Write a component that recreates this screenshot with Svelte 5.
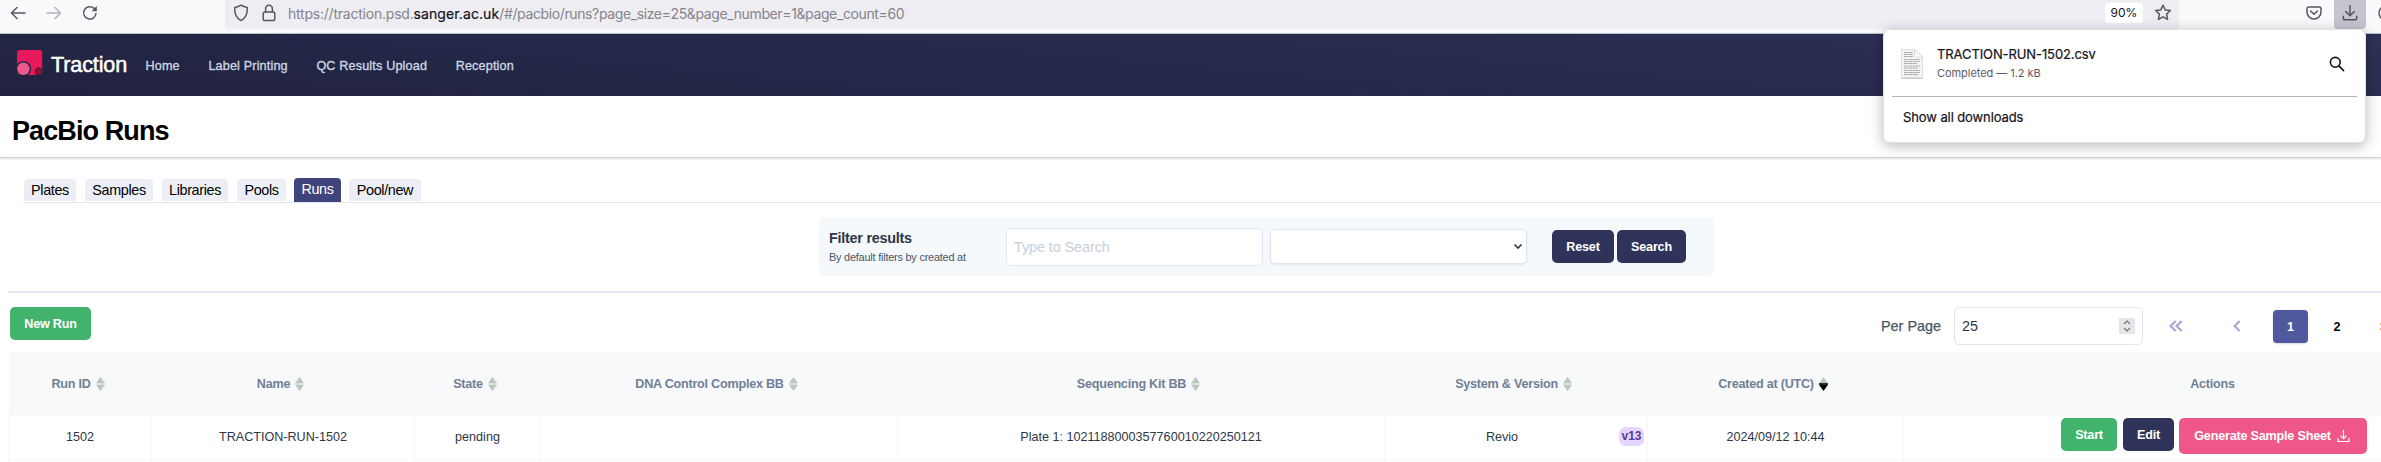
<script>
  const tabs = [
    { t: 'Plates', w: 52 }, { t: 'Samples', w: 68 }, { t: 'Libraries', w: 66 },
    { t: 'Pools', w: 49 }, { t: 'Runs', w: 47, on: true }, { t: 'Pool/new', w: 72 }
  ];
  const nav = ['Home', 'Label Printing', 'QC Results Upload', 'Reception'];
  const cols = [
    { h: 'Run ID', v: '1502' },
    { h: 'Name', v: 'TRACTION-RUN-1502' },
    { h: 'State', v: 'pending' },
    { h: 'DNA Control Complex BB', v: '' },
    { h: 'Sequencing Kit BB', v: 'Plate 1: 1021188000357760010220250121' },
    { h: 'System & Version', v: 'Revio', badge: 'v13' },
    { h: 'Created at (UTC)', v: '2024/09/12 10:44', desc: true }
  ];
</script>

<div class="page">
  <div class="toolbar">
    <div class="history">
      <svg width="16" height="16" viewBox="0 0 16 16" class="ic"><path d="M15 8H1.5M7 2.5L1.5 8L7 13.5" /></svg>
      <svg width="16" height="16" viewBox="0 0 16 16" class="ic dim"><path d="M1 8H14.5M9 2.5L14.5 8L9 13.5" /></svg>
      <svg width="16" height="16" viewBox="0 0 16 16" class="ic"><path d="M14 8.5A6.2 6.2 0 1 1 11.8 3.1L13 4.3" /><path class="fill" d="M14.8 1V6.2H9.6Z" /></svg>
    </div>
    <div class="urlbar">
      <svg width="16" height="18" viewBox="0 0 16 18" class="ic"><path d="M8 1.2C6.2 2.6 4 3.2 1.8 3.4C1.3 9.5 3.2 14 8 16.6C12.8 14 14.7 9.5 14.2 3.4C12 3.2 9.8 2.6 8 1.2Z" /></svg>
      <svg width="14" height="18" viewBox="0 0 14 18" class="ic lock"><rect x="1.2" y="8" width="11.6" height="8.6" rx="1.8" /><path d="M3.6 8V4.6A3.4 3.4 0 0 1 10.4 4.6V8" /></svg>
      <span class="url">https://traction.psd.<b>sanger.ac.uk</b><span class="path">/#/pacbio/runs?page_size=25&amp;page_number=1&amp;page_count=60</span></span>
      <span class="zoom">90%</span>
      <svg width="18" height="17" viewBox="0 0 18 17" class="ic"><path d="M9 1.2L11.2 5.9L16.4 6.5L12.6 10.1L13.6 15.4L9 12.8L4.4 15.4L5.4 10.1L1.6 6.5L6.8 5.9Z" /></svg>
    </div>
    <div class="tools">
      <svg width="16" height="16" viewBox="0 0 16 16" class="ic pocket"><path d="M2.6 2H13.4A1.6 1.6 0 0 1 15 3.6V7A7 7 0 0 1 1 7V3.6A1.6 1.6 0 0 1 2.6 2ZM4.6 6L8 9.3L11.4 6" /></svg>
      <div class="dl"><svg width="16" height="16" viewBox="0 0 16 16" class="ic"><path d="M8 .5V10.5M3.8 6.6L8 10.7L12.2 6.6M1.3 11.2V13A1.8 1.8 0 0 0 3.1 14.8H12.9A1.8 1.8 0 0 0 14.7 13V11.2" /></svg></div>
      <svg width="16" height="16" viewBox="0 0 16 16" class="ic account"><circle cx="8" cy="8" r="7" /></svg>
    </div>
  </div>

  <nav>
    <svg class="logo" width="26" height="26" viewBox="0 0 26 26">
      <defs><clipPath id="tile"><rect width="25.2" height="25" rx="2.6" /></clipPath></defs>
      <g clip-path="url(#tile)">
        <rect width="26" height="26" fill="#e8185b" />
        <circle cx="6.4" cy="18.8" r="7.8" fill="#272b4c" />
        <circle cx="6.4" cy="18.8" r="6.2" fill="#f0588b" />
        <circle cx="22" cy="21.6" r="4.2" fill="#3c1840" />
        <circle cx="22" cy="21.6" r="3.2" fill="#8c1038" />
      </g>
    </svg>
    <span class="brand">Traction</span>
    {#each nav as n}<span class="link">{n}</span>{/each}
  </nav>

  <header><h1>PacBio Runs</h1></header>

  <div class="tabs">
    {#each tabs as tab}<span class="tab" class:on={tab.on} style="width:{tab.w}px">{tab.t}</span>{/each}
  </div>

  <div class="filter">
    <div class="legend"><strong>Filter results</strong><small>By default filters by created at</small></div>
    <div class="search">Type to Search</div>
    <div class="select"><svg width="10" height="7" viewBox="0 0 10 7"><path d="M1.5 1.5L5 5L8.5 1.5" /></svg></div>
    <span class="btn navy reset">Reset</span>
    <span class="btn navy find">Search</span>
  </div>

  <div class="controls">
    <span class="btn green new">New Run</span>
    <div class="pager">
      <span class="per">Per Page</span>
      <div class="num">25<span class="spin"><svg width="10" height="14" viewBox="0 0 10 14"><path d="M2 5L5 2L8 5M2 9L5 12L8 9" /></svg></span></div>
      <svg class="chev first" width="14" height="12" viewBox="0 0 14 12"><path d="M6.7 1L1.6 6L6.7 11M12.7 1L7.6 6L12.7 11" /></svg>
      <svg class="chev prev" width="8" height="12" viewBox="0 0 8 12"><path d="M6.7 1L1.6 6L6.7 11" /></svg>
      <span class="pg cur">1</span>
      <span class="pg">2</span>
      <span class="pg">3</span>
    </div>
  </div>

  <div class="grid head">
    {#each cols as c}
      <div class="cell">{c.h}<svg class="sort" width="9" height="14" viewBox="0 0 9 14"><path d="M4.5 0L9 6.2H0Z" fill="#b9c7c0" /><path d="M0 7.8H9L4.5 14Z" fill={c.desc ? '#000' : '#b9c7c0'} /><path d="M0 6.2H9V7.8H0Z" fill={c.desc ? '#000' : '#dce3e0'} /></svg></div>
    {/each}
    <div class="cell">Actions</div>
  </div>
  <div class="grid row">
    {#each cols as c}
      <div class="cell"><span class="val">{c.v}</span>{#if c.badge}<span class="badge">{c.badge}</span>{/if}</div>
    {/each}
    <div class="cell actions">
      <span class="btn green start">Start</span>
      <span class="btn navy edit">Edit</span>
      <span class="btn pink gen">Generate Sample Sheet<svg width="13" height="14" viewBox="0 0 13 14"><path d="M6.5 .8V9.5M3.5 6.7L6.5 9.7L9.5 6.7M1 9V12.5H12V9" /></svg></span>
    </div>
  </div>
  <div class="grid row next">
    {#each [...cols, 0] as _}<div class="cell"></div>{/each}
  </div>

  <div class="popup">
    <div class="item">
      <svg width="22" height="30" viewBox="0 0 22 30">
        <path d="M.5 .5H13.5L21.5 8V29H.5Z" fill="#f4f4f4" stroke="#ddd" />
        <path d="M.5 29.2H21.5" stroke="#bbb" />
        <path d="M13.5 .5L21.5 8H15A1.5 1.5 0 0 1 13.5 6.5Z" fill="#fff" stroke="#ccc" stroke-width=".7" />
        <path d="M3 3.5H12M3 5.5H12M3 7.5H12M3 10.5H19M3 12.5H19M3 14.5H16M3 17H19M3 19H17M3 21.5H19M3 23.5H19M3 25.5H17" stroke="#aaa" stroke-width="1.2" stroke-dasharray="3 .4 2 .3" />
      </svg>
      <div class="file"><span class="name">TRACTION-RUN-1502.csv</span><span class="status">Completed — 1.2 kB</span></div>
      <svg class="mag" width="16" height="16" viewBox="0 0 16 16"><circle cx="6.3" cy="6.3" r="4.9" /><path d="M9.9 9.9L14.6 14.6" /></svg>
    </div>
    <div class="all">Show all downloads</div>
  </div>
</div>

<style>
  :global(body) { background: #fff; overflow: hidden; }
  .page, .page * { box-sizing: border-box; }
  .page { width: 2381px; height: 462px; overflow: hidden; position: relative; font-family: "Liberation Sans", Arial, sans-serif; font-size: 12.6px; color: #2d3748; }
  svg { display: block; flex: none; }
  .toolbar { height: 34px; display: flex; background: #f9f9fb; border-bottom: 1px solid #b8c0c4; font-family: Inter, sans-serif; }
  .ic { fill: none; stroke: #56565f; stroke-width: 1.5; stroke-linecap: round; stroke-linejoin: round; }
  .ic .fill { fill: #56565f; stroke: none; }
  .dim { stroke: #b3b3b8; }
  .history { width: 225px; display: flex; gap: 20px; padding: 5px 0 0 10px; }
  .urlbar { width: 1954px; height: 29px; background: #eeedf2; border-radius: 0 0 4px 4px; display: flex; padding-left: 8px; align-items: flex-start; }
  .urlbar > svg { margin-top: 4px; }
  .urlbar > svg.lock { margin-left: 13px; }
  .url { margin-left: 12px; width: 1817px; flex: none; font-size: 14px; line-height: 28px; color: #85848c; white-space: nowrap; letter-spacing: -0.22px; }
  .url b { font-weight: 400; color: #15141a; letter-spacing: .1px; -webkit-text-stroke: .2px #15141a; }
  .path { letter-spacing: -.38px; }
  .zoom { width: 38px; height: 20px; margin: 3px 11px 0 0; background: #fff; border-radius: 3px; text-align: center; font-size: 12px; line-height: 20px; color: #15141a; flex: none; }
  .tools { flex: 1; display: flex; padding-left: 127px; overflow: hidden; }
  .pocket { margin-top: 5px; }
  .dl { width: 32px; height: 29px; margin-left: 12px; background: #c5c4cf; border-radius: 0 0 4px 4px; padding: 5px 8px; flex: none; }
  .account { margin: 5px 0 0 12px; }

  nav { height: 62px; background: linear-gradient(185deg, #2d3157, #20223f); display: flex; align-items: center; padding: 0 0 0 17px; color: #cbd5e0; }
  .logo { margin-top: -5px; }
  .brand { margin-left: 8px; width: 94.5px; color: #fff; font-size: 21.6px; letter-spacing: -.15px; -webkit-text-stroke: .5px #fff; }
  .link { margin-right: 28.6px; letter-spacing: .17px; -webkit-text-stroke: .35px #cbd5e0; padding-top: 2px; white-space: nowrap; }

  header { height: 62px; border-bottom: 1px solid #d2d3d5; box-shadow: 0 1px 2px rgba(0,0,0,.14); padding-left: 12px; }
  h1 { margin: 0; font-size: 27px; letter-spacing: -.9px; line-height: 70px; color: #000; }
  .tabs { height: 45px; margin-left: 23px; padding-left: 1px; display: flex; align-items: flex-end; gap: 9px; border-bottom: 1px solid #dfe6f0; }
  .tab { height: 22px; margin-bottom: 1px; line-height: 23px; text-align: center; font-size: 14.4px; letter-spacing: -.36px; background: #ebeff5; border-radius: 4px 4px 0 0; color: #000; }
  .tab.on { height: 24px; margin: 0 -1px 0 -1px; background: #3f447c; color: #fff; border-radius: 4px 4px 0 0; }

  .filter { margin: 14px 0 0 819px; width: 895px; height: 59px; background: #f5f9fc; border-radius: 5px; display: flex; padding-left: 10px; }
  .legend { width: 177px; display: flex; flex-direction: column; padding-top: 12px; letter-spacing: -.25px; }
  strong { font-size: 14.4px; line-height: 18px; }
  small { font-size: 10.9px; line-height: 16px; margin-top: 2px; letter-spacing: -.21px; color: #4a5568; }
  .search { width: 257px; height: 38px; margin-top: 11px; border: 1px solid #e0e6f0; border-radius: 5px; background: #fff; padding-left: 7px; font-size: 14.4px; letter-spacing: -.08px; line-height: 36px; color: #cbd5e0; -webkit-text-stroke: .2px #cbd5e0; }
  .select { width: 257px; height: 35px; margin: 12px 0 0 7px; border: 1px solid #e0e4ee; border-radius: 5px; background: #fff; box-shadow: 0 1px 2px rgba(0,0,0,.08); display: flex; justify-content: flex-end; align-items: center; padding-right: 3px; }
  .select path { fill: none; stroke: #2d3748; stroke-width: 1.7; }
  .btn { height: 33px; line-height: 34px; border-radius: 5px; color: #fff; font-weight: 700; letter-spacing: -.2px; text-align: center; flex: none; }
  .navy { background: #2f3359; }
  .green { background: #41b36d; }
  .pink { background: #ee5787; }
  .reset { width: 62px; margin: 13px 3px 0 25px; }
  .find { width: 69px; margin-top: 13px; }

  .controls { margin: 15px 0 0 8px; height: 61px; border-top: 2px solid #e0e5f0; display: flex; justify-content: space-between; padding: 14px 0 0 2px; }
  .new { width: 81px; }
  .pager { width: 500px; height: 38px; display: flex; align-items: center; overflow: hidden; flex: none; }
  .per { width: 73px; flex: none; font-size: 14.4px; color: #4a5568; -webkit-text-stroke: .25px #4a5568; white-space: nowrap; }
  .num { width: 189px; flex: none; height: 38px; border: 1px solid #e0e6f0; border-radius: 5px; padding: 0 7px; font-size: 14.4px; display: flex; align-items: center; justify-content: space-between; }
  .spin { width: 16px; height: 16px; background: #e6e6ea; padding: 1px 3px; }
  .spin path { fill: none; stroke: #7b7b80; stroke-width: 1.3; }
  .chev { fill: none; stroke: #a3a9d2; stroke-width: 2.2; margin-top: -1px; }
  .first { margin-left: 26px; }
  .prev { margin: -1px 32px 0 50px; }
  .pg { width: 35px; height: 33px; line-height: 35px; text-align: center; font-weight: 700; color: #000; flex: none; margin-right: 11.5px; }
  .cur { background: #50589f; color: #fff; border-radius: 4px; box-shadow: 0 1px 2px rgba(0,0,0,.15); }

  .grid { display: grid; width: 2514px; grid-template-columns: 143px 263px 126px 357px 487px 263px 256px 619px; margin-left: 8px; }
  .cell { display: flex; justify-content: center; align-items: center; white-space: nowrap; }
  .head { height: 63px; width: 2513px; margin-left: 9px; background: #f7f9fb; color: #718096; font-weight: 700; letter-spacing: -.23px; grid-template-columns: 142px 263px 126px 357px 487px 263px 256px 619px; }
  .head .cell { padding-right: 4px; }
  .head .cell:last-child { padding-right: 0; }
  .sort { margin-left: 5px; }
  .row { height: 44px; border-top: 1px solid #f5f8fc; }
  .row .cell { border-left: 1px solid #f5f8fc; padding-bottom: 2px; }
  .val { flex: 1; text-align: center; }
  .badge { width: 25px; height: 19px; line-height: 19px; margin-right: 3px; border-radius: 7px; background: #e6d5fd; color: #553c9a; text-align: center; font-weight: 700; font-size: 12px; }
  .row .actions { align-items: flex-start; padding: 2px 0 0 2px; }
  .start { width: 56px; margin-right: 6px; }
  .edit { width: 51px; margin-right: 5px; }
  .gen { width: 188px; height: 36px; line-height: 36px; display: flex; align-items: center; justify-content: center; gap: 6px; padding-right: 2px; }
  .gen path { fill: none; stroke: #fff; stroke-width: 1.2; }

  .popup { position: absolute; left: 1883px; top: 29px; width: 483px; height: 114px; background: #fff; border: 1px solid #e3e3e6; border-radius: 7px; box-shadow: 0 3px 14px rgba(0,0,0,.28); padding: 0 8px; font-family: Inter, sans-serif; color: #15141a; }
  .item { height: 67px; border-bottom: 1px solid #b5b5bb; display: flex; padding: 19px 12px 0 9px; }
  .file { flex: 1; display: flex; flex-direction: column; padding-left: 14px; margin-top: -4px; }
  .name { font-size: 13px; line-height: 18px; letter-spacing: -.1px; -webkit-text-stroke: .2px #15141a; }
  .status { font-size: 11px; line-height: 16px; margin-top: 2px; color: #5b5b66; letter-spacing: -.05px; }
  .mag { fill: none; stroke: #15141a; stroke-width: 1.6; stroke-linecap: round; margin-top: 7px; }
  .all { padding-left: 11px; font-size: 13px; line-height: 41px; letter-spacing: -.1px; -webkit-text-stroke: .2px #15141a; }
</style>
